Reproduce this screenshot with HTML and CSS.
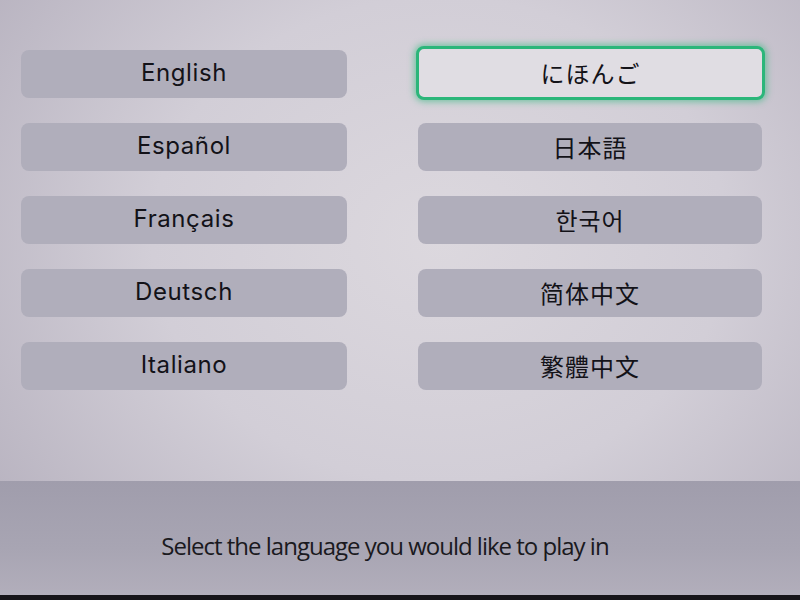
FILE: index.html
```html
<!DOCTYPE html>
<html lang="en">
<head>
<meta charset="utf-8">
<title>Language Select</title>
<link rel="stylesheet" href="styles.css">
</head>
<body>
<div class="screen">
  <main class="langs">
    <div class="btn">English</div>
    <div class="btn selected" lang="ja">にほんご</div>
    <div class="btn">Español</div>
    <div class="btn" lang="ja">日本語</div>
    <div class="btn">Français</div>
    <div class="btn" lang="ko">한국어</div>
    <div class="btn">Deutsch</div>
    <div class="btn" lang="zh-Hans">简体中文</div>
    <div class="btn">Italiano</div>
    <div class="btn" lang="zh-Hant">繁體中文</div>
  </main>
  <footer class="bar">
    <p class="prompt">Select the language you would like to play in</p>
  </footer>
  <div class="edge"></div>
</div>
</body>
</html>
```
FILE: styles.css
```css
html, body {
  margin: 0;
  padding: 0;
  width: 800px;
  height: 600px;
  overflow: hidden;
  background: #111;
}
.screen {
  width: 800px;
  height: 600px;
  display: flex;
  flex-direction: column;
  background: radial-gradient(ellipse 80% 90% at 55% 40%, #dcd8de 0%, #d2ced7 45%, #b8b3c0 85%, #a59faf 100%);
  font-family: "Open Sans", "Noto Sans CJK JP", sans-serif;
  color: #131218;
}
.langs {
  flex: 1;
  display: grid;
  grid-template-columns: 326px 344px;
  grid-auto-rows: 48px;
  column-gap: 71px;
  row-gap: 25px;
  padding: 50px 0 0 21px;
  align-content: start;
}
.btn {
  background: #b0aebb;
  border-radius: 8px;
  display: flex;
  align-items: center;
  justify-content: center;
  padding-bottom: 3px;
  box-sizing: border-box;
  font-family: Inter, "Open Sans", sans-serif;
  font-size: 24px;
  font-weight: 400;
  letter-spacing: 0.6px;
}
.btn[lang] {
  font-family: "Noto Sans CJK JP", sans-serif;
  font-weight: 400;
  font-size: 24px;
  letter-spacing: 1px;
  padding-bottom: 2px;
}
.btn[lang="ko"] { font-family: "Noto Sans CJK KR", sans-serif; }
.btn[lang="zh-Hans"] { font-family: "Noto Sans CJK SC", sans-serif; }
.btn[lang="zh-Hant"] { font-family: "Noto Sans CJK TC", sans-serif; }
.btn.selected {
  background: #e0dde3;
  border: 3px solid #2bb67a;
  box-shadow: 0 0 6px 2px rgba(43, 182, 122, 0.55);
  margin: -4px -3px -2px -2px;
}
.bar {
  height: 114px;
  background: linear-gradient(180deg, #a09dac 0%, #a8a5b3 60%, #b2aebb 100%);
  display: flex;
  align-items: center;
  justify-content: center;
}
.prompt {
  margin: 14px 30px 0 0;
  font-size: 24px;
  font-weight: 400;
  letter-spacing: -1px;
  color: #1a1920;
}
.edge {
  height: 5px;
  background: #161419;
}
```
